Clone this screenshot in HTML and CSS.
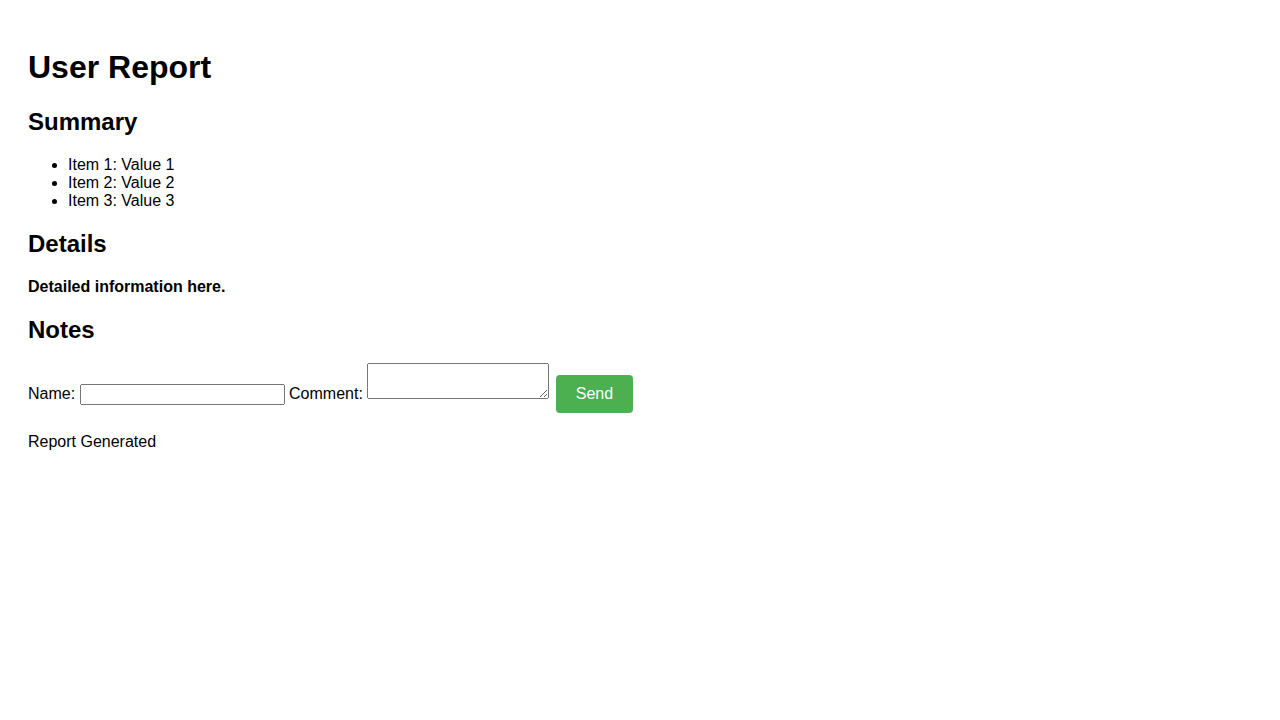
FILE: index.html
```html
<!DOCTYPE html>
<html>
<head>
<meta charset="utf-8">
<title>User Report</title>
<link rel="stylesheet" href="styles.css">
</head>
<body>
<h1>User Report</h1>
<h2>Summary</h2>
<ul>
<li>Item 1: Value 1</li>
<li>Item 2: Value 2</li>
<li>Item 3: Value 3</li>
</ul>
<h2>Details</h2>
<p class="bold">Detailed information here.</p>
<h2>Notes</h2>
<form class="notes">
<label for="name">Name:</label> <input type="text" id="name" class="name-input"> <label for="comment">Comment:</label> <textarea id="comment"></textarea> <button type="button" class="send">Send</button>
</form>
<div class="footer">Report Generated</div>
</body>
</html>
```
FILE: styles.css
```css
body {
  font-family: "Liberation Sans", Arial, sans-serif;
  padding: 20px;
  color: #000;
}
.bold {
  font-weight: bold;
}
.name-input {
  box-sizing: border-box;
  width: 205px;
}
.send {
  background-color: #4CAF50;
  color: #fff;
  border: none;
  padding: 10px 20px;
  margin-left: 2px;
  border-radius: 4px;
  font-family: "Liberation Sans", Arial, sans-serif;
  font-size: 16px;
}
.footer {
  margin-top: 20px;
}
```
